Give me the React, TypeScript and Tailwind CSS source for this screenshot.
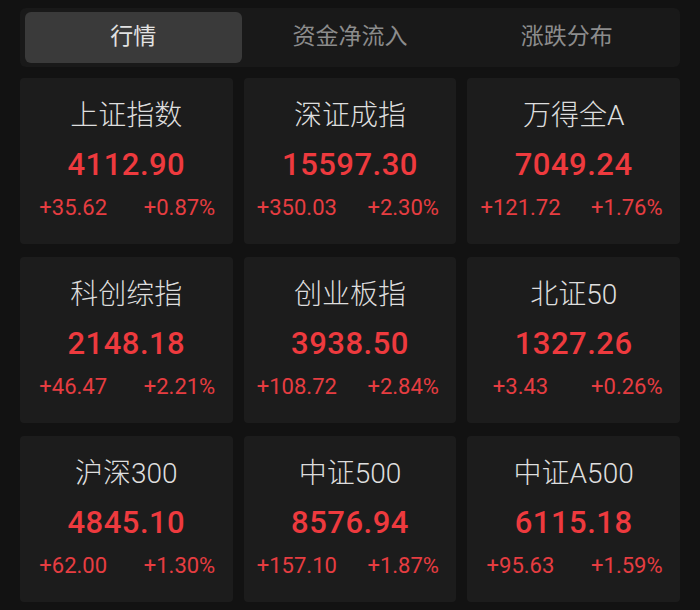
import React from 'react';

const tabs = ['行情', '资金净流入', '涨跌分布'];

const indices = [
    { name: '上证指数', value: '4112.90', change: '+35.62', pct: '+0.87%' },
    { name: '深证成指', value: '15597.30', change: '+350.03', pct: '+2.30%' },
    { name: '万得全A', value: '7049.24', change: '+121.72', pct: '+1.76%' },
    { name: '科创综指', value: '2148.18', change: '+46.47', pct: '+2.21%' },
    { name: '创业板指', value: '3938.50', change: '+108.72', pct: '+2.84%' },
    { name: '北证50', value: '1327.26', change: '+3.43', pct: '+0.26%' },
    { name: '沪深300', value: '4845.10', change: '+62.00', pct: '+1.30%' },
    { name: '中证500', value: '8576.94', change: '+157.10', pct: '+1.87%' },
    { name: '中证A500', value: '6115.18', change: '+95.63', pct: '+1.59%' },
];

export default function App() {
    return (
        <div
            className="w-[700px] h-[610px] bg-[#121212] pt-[8px] px-[20px]"
            style={{ fontFamily: 'Roboto, "Noto Sans CJK SC", sans-serif' }}
        >
            {/* Tabs */}
            <div className="grid grid-cols-3 bg-[#191919] rounded-md px-[5px] py-[4px]">
                {tabs.map((t, i) => (
                    <div
                        key={t}
                        className={
                            i === 0
                                ? 'h-[51px] flex items-center justify-center rounded-md bg-[#3a3a3a] text-[23px] text-[#e2e2e2]'
                                : 'h-[51px] flex items-center justify-center text-[23px] text-[#8c8c8c]'
                        }
                    >
                        {t}
                    </div>
                ))}
            </div>

            {/* Index cards */}
            <div className="grid grid-cols-3 gap-x-[11px] gap-y-[13px] mt-[11px]">
                {indices.map((d) => (
                    <div key={d.name} className="h-[166px] bg-[#1c1c1c] rounded-sm flex flex-col items-center pt-[22px]">
                        <div className="text-[28px] leading-[32px] text-[#dedede] font-light">{d.name}</div>
                        <div className="mt-[13px] text-[31px] leading-[40px] font-medium text-[#ee3a3e] tracking-[0.5px]">
                            {d.value}
                        </div>
                        <div className="mt-[9px] w-full grid grid-cols-2 text-[22px] leading-[28px] text-[#e63d41]">
                            <div className="text-center">{d.change}</div>
                            <div className="text-center">{d.pct}</div>
                        </div>
                    </div>
                ))}
            </div>
        </div>
    );
}
